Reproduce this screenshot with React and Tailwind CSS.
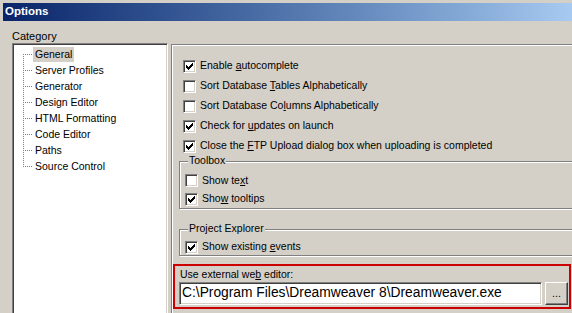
import React from 'react'

const Check = () => (
  <svg width="7" height="7" viewBox="0 0 7 7" shapeRendering="crispEdges">
    <path d="M0 2h1v3H0zM1 3h1v3H1zM2 4h1v3H2zM3 3h1v3H3zM4 2h1v3H4zM5 1h1v3H5zM6 0h1v3H6z" fill="#000" />
  </svg>
)

const Box = ({ on }) => (
  <span className="w-[13px] h-[13px] shrink-0 bg-white border border-t-[#808080] border-l-[#808080] border-r-white border-b-white shadow-[inset_1px_1px_0_#404040,inset_-1px_-1px_0_#d4d0c8] flex items-center justify-center">
    {on && <Check />}
  </span>
)

// text with the access key letter underlined
const Key = ({ text, u }) => (
  <span className="whitespace-nowrap">
    {text.slice(0, u)}
    <span className="underline underline-offset-[1px]">{text[u]}</span>
    {text.slice(u + 1)}
  </span>
)

const Row = ({ on, text, u, h = 'h-[20px]' }) => (
  <div className={`flex items-center gap-[4px] ${h}`}>
    <Box on={on} />
    <Key text={text} u={u} />
  </div>
)

const Group = ({ title, className, children }) => (
  <div className={`relative w-[400px] border border-[#808080] shadow-[1px_1px_0_#fff,inset_1px_1px_0_#fff] pl-[5px] ${className}`}>
    <span className="absolute left-[8px] top-[-8px] px-[1px] bg-[#d4d0c8] leading-[13px]">{title}</span>
    {children}
  </div>
)

const tree = ['General', 'Server Profiles', 'Generator', 'Design Editor', 'HTML Formatting', 'Code Editor', 'Paths', 'Source Control']

export default function App() {
  return (
    <div className="w-[572px] h-[313px] overflow-hidden bg-[#d4d0c8] pt-[3px] pl-[3px] text-[10.5px] text-black font-['Liberation_Sans',Arial,sans-serif]">
      <div className="h-[18px] flex items-center pl-[2px] bg-gradient-to-r from-[#0a246a] to-[#a6caf0] text-white font-bold text-[11.5px]">
        Options
      </div>
      <div className="flex -ml-[3px]">
        <div className="w-[168px] shrink-0 pl-[12px] pt-[9px]">
          <div className="h-[13px] leading-[13px] text-[11px]">Category</div>
          <div className="h-[300px] bg-white border border-t-[#808080] border-l-[#808080] border-r-white border-b-white shadow-[inset_1px_1px_0_#404040,inset_-1px_-1px_0_#d4d0c8] pt-[2px] pl-[1px]">
            {tree.map((t, i) => (
              <div key={t} className="flex items-center h-[16px]">
                <svg width="19" height="16" className="shrink-0" shapeRendering="crispEdges">
                  <line x1="9.5" y1={i === 0 ? 8 : 0} x2="9.5" y2={i === tree.length - 1 ? 9 : 16} stroke="#808080" strokeDasharray="1 1" />
                  <line x1="11" y1="8.5" x2="19" y2="8.5" stroke="#808080" strokeDasharray="1 1" />
                </svg>
                <span className={`h-[15px] leading-[15px] px-[2px] ${i === 0 ? 'bg-[#d4d0c8]' : ''}`}>{t}</span>
              </div>
            ))}
          </div>
        </div>
        <div className="w-[420px] shrink-0 mt-[23px] ml-[3px] h-[300px] border-t border-l border-[#808080] shadow-[inset_1px_1px_0_#fff] pl-[7px] pt-[11px]">
          <div className="pl-[4px]">
            <Row on text="Enable autocomplete" u={7} />
            <Row text="Sort Database Tables Alphabetically" u={14} />
            <Row text="Sort Database Columns Alphabetically" u={16} />
            <Row on text="Check for updates on launch" u={10} />
            <Row on text="Close the FTP Upload dialog box when uploading is completed" u={10} />
          </div>
          <Group title="Toolbox" className="mt-[5px] pt-[9px]">
            <Row text="Show text" u={7} h="h-[19px]" />
            <Row on text="Show tooltips" u={3} h="h-[18px]" />
          </Group>
          <Group title="Project Explorer" className="mt-[20px] pt-[9px]">
            <Row on text="Show existing events" u={14} h="h-[16px]" />
          </Group>
          <div className="-ml-[6px] mt-[8px] w-[398px] border-2 border-[#cc0000] pl-[4px] pt-[1px] pb-[2px]">
            <div className="h-[15px] leading-[15px] pl-[1px]">
              <Key text="Use external web editor:" u={15} />
            </div>
            <div className="flex gap-[3px]">
              <div className="w-[363px] h-[23px] bg-white border border-t-[#808080] border-l-[#808080] border-r-white border-b-white shadow-[inset_1px_1px_0_#404040,inset_-1px_-1px_0_#d4d0c8] flex items-center pl-[2px] text-[13.8px] whitespace-nowrap overflow-hidden">
                C:\Program Files\Dreamweaver 8\Dreamweaver.exe
              </div>
              <div className="w-[23px] h-[23px] border border-t-white border-l-white border-r-[#404040] border-b-[#404040] shadow-[inset_-1px_-1px_0_#808080] flex items-center justify-center">
                ...
              </div>
            </div>
          </div>
        </div>
      </div>
    </div>
  )
}
